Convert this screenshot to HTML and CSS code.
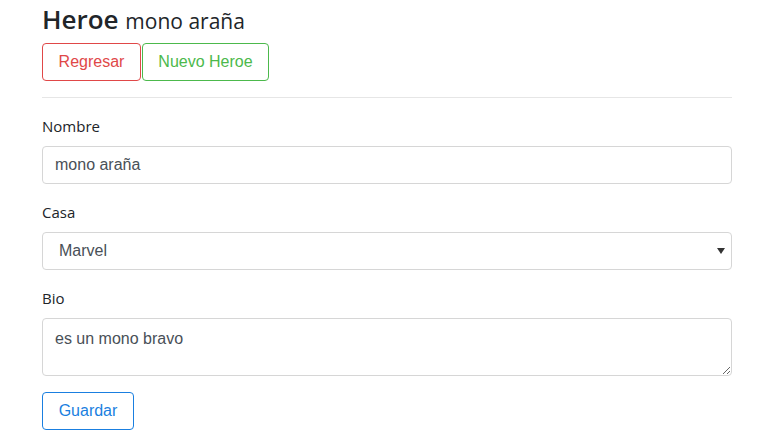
FILE: index.html
```html
<!DOCTYPE html>
<html lang="es">
<head>
<meta charset="utf-8">
<title>Heroe</title>
<link rel="stylesheet" href="styles.css">
</head>
<body>
<div class="container">
  <h3 class="title">Heroe <small>mono araña</small></h3>
  <div class="actions">
    <button class="btn btn-red">Regresar</button>
    <button class="btn btn-green">Nuevo Heroe</button>
  </div>
  <hr class="sep">
  <form class="form">
    <div class="group">
      <label class="label">Nombre</label>
      <input class="control" type="text" value="mono araña">
    </div>
    <div class="group">
      <label class="label">Casa</label>
      <div class="select">
        <span class="select-text">Marvel</span>
        <svg class="caret" width="8" height="6" viewBox="0 0 8 6"><path d="M0 0 H8 L4 6 Z" fill="#333"/></svg>
      </div>
    </div>
    <div class="group">
      <label class="label">Bio</label>
      <textarea class="control area">es un mono bravo</textarea>
    </div>
    <button class="btn btn-blue" type="button">Guardar</button>
  </form>
</div>
</body>
</html>
```

FILE: styles.css
```css
* { box-sizing: border-box; }
html, body { margin: 0; padding: 0; background: #fff; }
body {
  font-family: "Open Sans", "Noto Sans", sans-serif;
  color: #212529;
}
.container {
  width: 690px;
  margin-left: 42px;
  padding-top: 3px;
}
.title {
  margin: 0 0 5px 0;
  font-size: 26px;
  font-weight: 600;
  line-height: 33px;
  font-family: "Open Sans", sans-serif;
}
.title small {
  font-size: 21px;
  font-weight: 400;
}
.actions { display: flex; gap: 1px; }
.btn {
  font-family: "Liberation Sans", Arial, sans-serif;
  font-size: 16px;
  height: 38px;
  padding: 0 16px;
  background: #fff;
  border: 1px solid;
  border-radius: 4px;
  line-height: 36px;
}
.btn-red { color: #e04848; border-color: #e04848; width: 99px; padding: 0; }
.btn-green { color: #4cb94c; border-color: #4cb94c; width: 127px; padding: 0; }
.btn-blue { color: #1a7fe0; border-color: #1a7fe0; width: 92px; padding: 0; }
.sep {
  border: 0;
  border-top: 1px solid #e6e6e6;
  margin: 16px 0 16px 0;
}
.group { margin-bottom: 16px; }
.label {
  display: block;
  font-size: 15px;
  line-height: 24px;
  margin-bottom: 8px;
  color: #212529;
}
.control {
  display: block;
  width: 100%;
  height: 38px;
  border: 1px solid #d6d6d6;
  border-radius: 4px;
  padding: 0 12px;
  font-family: "Liberation Sans", Arial, sans-serif;
  font-size: 16px;
  color: #495057;
  background: #fff;
}
.select {
  display: flex;
  align-items: center;
  justify-content: space-between;
  height: 38px;
  border: 1px solid #d6d6d6;
  border-radius: 4px;
  padding: 0 6px 0 16px;
  font-family: "Liberation Sans", Arial, sans-serif;
  font-size: 16px;
  color: #495057;
}
.area {
  height: 58px;
  padding: 8px 12px;
  line-height: 24px;
  resize: vertical;
}
```
